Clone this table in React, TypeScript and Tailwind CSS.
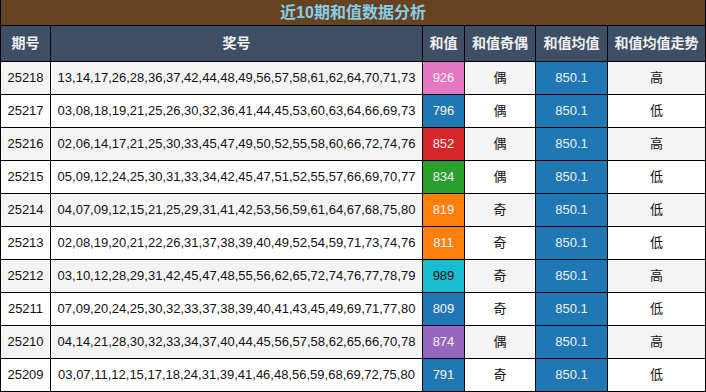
import React from "react";

const rows: [string, string, number, string, string, string, string][] = [
  ["25218", "13,14,17,26,28,36,37,42,44,48,49,56,57,58,61,62,64,70,71,73", 926, "bg-[#e377c2]", "text-[#f3f3f3]", "偶", "高"],
  ["25217", "03,08,18,19,21,25,26,30,32,36,41,44,45,53,60,63,64,66,69,73", 796, "bg-[#1f77b4]", "text-[#f3f3f3]", "偶", "低"],
  ["25216", "02,06,14,17,21,25,30,33,45,47,49,50,52,55,58,60,66,72,74,76", 852, "bg-[#d62728]", "text-[#f3f3f3]", "偶", "高"],
  ["25215", "05,09,12,24,25,30,31,33,34,42,45,47,51,52,55,57,66,69,70,77", 834, "bg-[#2ca02c]", "text-[#f3f3f3]", "偶", "低"],
  ["25214", "04,07,09,12,15,21,25,29,31,41,42,53,56,59,61,64,67,68,75,80", 819, "bg-[#ff7f0e]", "text-[#f3f3f3]", "奇", "低"],
  ["25213", "02,08,19,20,21,22,26,31,37,38,39,40,49,52,54,59,71,73,74,76", 811, "bg-[#ff7f0e]", "text-[#f3f3f3]", "奇", "低"],
  ["25212", "03,10,12,28,29,31,42,45,47,48,55,56,62,65,72,74,76,77,78,79", 989, "bg-[#17becf]", "text-[#111111]", "奇", "高"],
  ["25211", "07,09,20,24,25,30,32,33,37,38,39,40,41,43,45,49,69,71,77,80", 809, "bg-[#1f77b4]", "text-[#f3f3f3]", "奇", "低"],
  ["25210", "04,14,21,28,30,32,33,34,37,40,44,45,56,57,58,62,65,66,70,78", 874, "bg-[#9467bd]", "text-[#f3f3f3]", "偶", "高"],
  ["25209", "03,07,11,12,15,17,18,24,31,39,41,46,48,56,59,68,69,72,75,80", 791, "bg-[#1f77b4]", "text-[#f3f3f3]", "奇", "低"],
];

const headers = ["期号", "奖号", "和值", "和值奇偶", "和值均值", "和值均值走势"];

export default function App() {
  return (
    <div
      className="w-[706px] h-[392px] bg-white"
      style={{ fontFamily: '"Liberation Sans", Arial, "Noto Sans CJK SC", sans-serif' }}
    >
      <div className="grid grid-cols-[49px_371px_41px_70px_71px_97px] gap-px px-px pb-px bg-black">
        <div className="col-span-6 h-[25px] bg-[#654321] flex items-center justify-center text-[16px] font-bold text-[#87ceeb]">
          近10期和值数据分析
        </div>
        {headers.map((h) => (
          <div
            key={h}
            className="h-[35px] bg-[#3e4f65] flex items-center justify-center text-[14px] font-bold text-[#f0f0f0] whitespace-nowrap"
          >
            {h}
          </div>
        ))}
        {rows.map(([id, nums, sum, bg, fg, parity, trend], i) => {
          const rowBg = i % 2 === 0 ? "bg-[#f4f4f4]" : "bg-white";
          return (
            <React.Fragment key={id}>
              <div className={`h-[32px] ${rowBg} flex items-center justify-center text-[13px] text-[#111]`}>{id}</div>
              <div className={`h-[32px] ${rowBg} flex items-center justify-center text-[13px] text-[#111] whitespace-nowrap`}>{nums}</div>
              <div className={`h-[32px] ${bg} ${fg} flex items-center justify-center text-[13px]`}>{sum}</div>
              <div className={`h-[32px] ${rowBg} flex items-center justify-center text-[13px] text-[#111]`}>{parity}</div>
              <div className="h-[32px] bg-[#1f77b4] flex items-center justify-center text-[13px] text-[#f0f0f0]">850.1</div>
              <div className={`h-[32px] ${rowBg} flex items-center justify-center text-[13px] text-[#111]`}>{trend}</div>
            </React.Fragment>
          );
        })}
      </div>
    </div>
  );
}
